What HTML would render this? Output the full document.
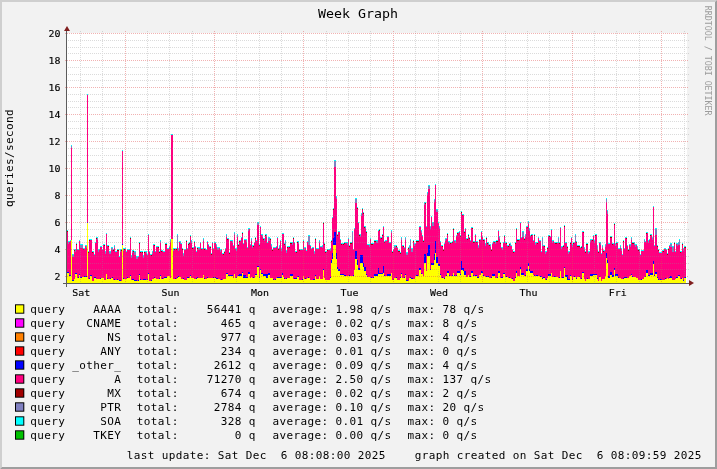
<!DOCTYPE html>
<html lang="en"><head><meta charset="utf-8"><title>Week Graph</title>
<style>
html,body{margin:0;padding:0;background:#f2f2f2;}
body{width:717px;height:469px;overflow:hidden;}
svg{display:block;will-change:transform;}
text{font-family:'DejaVu Sans Mono','Liberation Mono',monospace;fill:#000;white-space:pre;}
.lg{font-size:11px;letter-spacing:0.378px;}
.ax{font-size:10px;letter-spacing:0px;}
.tt{font-size:13px;letter-spacing:0.17px;}
.wm{font-size:8.3px;fill:#9c9c9c;letter-spacing:0px;}
</style></head><body>
<svg width="717" height="469" viewBox="0 0 717 469">
<rect x="0" y="0" width="717" height="469" fill="#f2f2f2"/>
<polygon points="0,0 717,0 715,2 2,2 2,467 0,469" fill="#cfcfcf"/>
<polygon points="717,469 0,469 2,467 715,467 715,2 717,0" fill="#9e9e9e"/>
<rect x="67" y="33" width="620" height="250" fill="#fff"/>
<g shape-rendering="crispEdges">
<path fill="#ffff00" d="M67 273h2v10h-2zM69 276h2v7h-2zM71 240h1v43h-1zM72 281h2v2h-2zM74 279h1v4h-1zM75 274h2v9h-2zM77 278h2v5h-2zM79 275h1v8h-1zM80 278h2v5h-2zM82 277h5v6h-5zM87 223h1v60h-1zM88 279h2v4h-2zM90 276h2v7h-2zM92 281h2v2h-2zM94 278h2v5h-2zM96 279h5v4h-5zM101 278h3v5h-3zM104 280h2v3h-2zM106 274h1v9h-1zM107 279h4v4h-4zM111 278h2v5h-2zM113 280h6v3h-6zM119 281h3v2h-3zM122 245h1v38h-1zM123 279h4v4h-4zM127 278h3v5h-3zM130 276h1v7h-1zM131 280h3v3h-3zM134 281h5v2h-5zM139 275h1v8h-1zM140 280h8v3h-8zM148 274h1v9h-1zM149 281h3v2h-3zM152 279h2v4h-2zM154 278h2v5h-2zM156 279h4v4h-4zM160 276h1v7h-1zM161 279h3v4h-3zM164 278h3v5h-3zM167 276h3v7h-3zM170 278h1v5h-1zM171 239h2v44h-2zM173 279h4v4h-4zM177 278h1v5h-1zM178 277h3v6h-3zM181 279h3v4h-3zM184 280h3v3h-3zM187 278h3v5h-3zM190 276h1v7h-1zM191 278h3v5h-3zM194 279h3v4h-3zM197 278h6v5h-6zM203 275h1v8h-1zM204 279h3v4h-3zM207 278h9v5h-9zM216 279h4v4h-4zM220 280h3v3h-3zM223 279h3v4h-3zM226 274h2v9h-2zM228 276h5v7h-5zM233 278h1v5h-1zM234 274h1v9h-1zM235 278h2v5h-2zM237 276h5v7h-5zM242 273h1v10h-1zM243 278h5v5h-5zM248 274h2v9h-2zM250 278h1v5h-1zM251 277h1v6h-1zM252 278h3v5h-3zM255 275h2v8h-2zM257 267h2v16h-2zM259 278h1v5h-1zM260 270h1v13h-1zM261 274h2v9h-2zM263 276h3v7h-3zM266 278h2v5h-2zM268 275h2v8h-2zM270 278h3v5h-3zM273 280h3v3h-3zM276 278h6v5h-6zM282 275h1v8h-1zM283 277h1v6h-1zM284 279h3v4h-3zM287 278h3v5h-3zM290 276h3v7h-3zM293 279h4v4h-4zM297 277h2v6h-2zM299 280h4v3h-4zM303 276h1v7h-1zM304 279h3v4h-3zM307 278h3v5h-3zM310 280h5v3h-5zM315 276h1v7h-1zM316 279h3v4h-3zM319 276h1v7h-1zM320 279h3v4h-3zM323 270h1v13h-1zM324 278h1v5h-1zM325 280h5v3h-5zM330 278h1v5h-1zM331 263h1v20h-1zM332 259h1v24h-1zM333 245h3v38h-3zM336 259h1v24h-1zM337 269h1v14h-1zM338 271h2v12h-2zM340 275h4v8h-4zM344 276h10v7h-10zM354 270h1v13h-1zM355 259h2v24h-2zM357 265h1v18h-1zM358 270h2v13h-2zM360 263h3v20h-3zM363 267h1v16h-1zM364 271h2v12h-2zM366 275h1v8h-1zM367 277h3v6h-3zM370 278h4v5h-4zM374 276h4v7h-4zM378 274h5v9h-5zM383 273h1v10h-1zM384 276h7v7h-7zM391 273h1v10h-1zM392 280h2v3h-2zM394 278h3v5h-3zM397 280h3v3h-3zM400 278h1v5h-1zM401 274h1v9h-1zM402 278h3v5h-3zM405 275h1v8h-1zM406 281h3v2h-3zM409 278h2v5h-2zM411 279h4v4h-4zM415 276h4v7h-4zM419 270h2v13h-2zM421 274h2v9h-2zM423 276h1v7h-1zM424 263h2v20h-2zM426 271h1v12h-1zM427 256h3v27h-3zM430 270h1v13h-1zM431 265h3v18h-3zM434 260h1v23h-1zM435 253h1v30h-1zM436 263h2v20h-2zM438 266h2v17h-2zM440 275h1v8h-1zM441 278h3v5h-3zM444 279h1v4h-1zM445 276h2v7h-2zM447 273h2v10h-2zM449 276h4v7h-4zM453 273h1v10h-1zM454 276h3v7h-3zM457 273h3v10h-3zM460 275h1v8h-1zM461 270h2v13h-2zM463 271h1v12h-1zM464 275h2v8h-2zM466 277h2v6h-2zM468 275h1v8h-1zM469 277h2v6h-2zM471 273h2v10h-2zM473 276h4v7h-4zM477 278h2v5h-2zM479 275h2v8h-2zM481 273h2v10h-2zM483 276h2v7h-2zM485 277h4v6h-4zM489 278h3v5h-3zM492 276h3v7h-3zM495 278h3v5h-3zM498 273h2v10h-2zM500 278h3v5h-3zM503 274h2v9h-2zM505 277h3v6h-3zM508 278h3v5h-3zM511 279h2v4h-2zM513 281h2v2h-2zM515 278h1v5h-1zM516 273h1v10h-1zM517 276h3v7h-3zM520 269h1v14h-1zM521 275h3v8h-3zM524 276h2v7h-2zM526 271h2v12h-2zM528 266h1v17h-1zM529 271h1v12h-1zM530 273h3v10h-3zM533 275h1v8h-1zM534 276h6v7h-6zM540 277h2v6h-2zM542 279h1v4h-1zM543 278h2v5h-2zM545 280h2v3h-2zM547 278h1v5h-1zM548 276h3v7h-3zM551 273h1v10h-1zM552 277h6v6h-6zM558 278h2v5h-2zM560 271h1v12h-1zM561 278h3v5h-3zM564 268h1v15h-1zM565 277h2v6h-2zM567 280h3v3h-3zM570 276h2v7h-2zM572 280h1v3h-1zM573 277h3v6h-3zM576 279h1v4h-1zM577 277h3v6h-3zM580 279h2v4h-2zM582 273h2v10h-2zM584 279h1v4h-1zM585 281h1v2h-1zM586 279h4v4h-4zM590 276h3v7h-3zM593 275h4v8h-4zM597 279h1v4h-1zM598 281h1v2h-1zM599 277h2v6h-2zM601 281h1v2h-1zM602 279h3v4h-3zM605 276h1v7h-1zM606 258h1v25h-1zM607 263h1v20h-1zM608 278h2v5h-2zM610 275h2v8h-2zM612 277h2v6h-2zM614 270h1v13h-1zM615 276h3v7h-3zM618 278h3v5h-3zM621 279h3v4h-3zM624 278h5v5h-5zM629 276h2v7h-2zM631 275h1v8h-1zM632 277h4v6h-4zM636 278h2v5h-2zM638 280h4v3h-4zM642 279h2v4h-2zM644 277h2v6h-2zM646 273h2v10h-2zM648 276h2v7h-2zM650 275h3v8h-3zM653 264h1v19h-1zM654 276h1v7h-1zM655 274h2v9h-2zM657 278h1v5h-1zM658 280h7v3h-7zM665 279h2v4h-2zM667 278h1v5h-1zM668 279h1v4h-1zM669 278h3v5h-3zM672 280h3v3h-3zM675 279h1v4h-1zM676 278h2v5h-2zM678 276h2v7h-2zM680 279h2v4h-2zM682 278h1v5h-1zM683 281h1v2h-1zM684 278h2v5h-2z"/>
<path fill="#0000ff" d="M67 272h2v1h-2zM69 275h2v1h-2zM72 280h2v1h-2zM75 273h2v1h-2zM78 277h1v1h-1zM79 274h1v1h-1zM80 277h2v1h-2zM84 276h3v1h-3zM87 222h1v1h-1zM89 278h1v1h-1zM90 275h2v1h-2zM94 277h2v1h-2zM100 278h1v1h-1zM107 278h1v1h-1zM110 278h1v1h-1zM112 277h1v1h-1zM114 279h1v1h-1zM117 279h1v1h-1zM119 280h2v1h-2zM122 244h1v1h-1zM123 278h1v1h-1zM127 277h1v1h-1zM130 275h1v1h-1zM132 279h2v1h-2zM134 280h3v1h-3zM138 280h1v1h-1zM139 274h1v1h-1zM140 279h1v1h-1zM143 279h3v1h-3zM147 279h1v1h-1zM148 273h1v1h-1zM151 280h1v1h-1zM154 277h1v1h-1zM159 278h1v1h-1zM160 275h1v1h-1zM162 278h1v1h-1zM164 277h3v1h-3zM175 278h1v1h-1zM177 277h1v1h-1zM178 276h1v1h-1zM183 278h1v1h-1zM187 277h2v1h-2zM190 275h1v1h-1zM196 278h1v1h-1zM197 277h1v1h-1zM204 278h1v1h-1zM207 277h1v1h-1zM213 277h1v1h-1zM215 277h1v1h-1zM216 278h2v1h-2zM221 279h1v1h-1zM226 273h2v1h-2zM228 275h5v1h-5zM236 277h1v1h-1zM238 275h1v1h-1zM239 274h3v2h-3zM242 272h1v1h-1zM243 275h3v3h-3zM246 277h2v1h-2zM248 272h2v2h-2zM253 277h1v1h-1zM255 274h2v1h-2zM257 266h2v1h-2zM259 277h1v1h-1zM260 269h1v1h-1zM261 273h2v1h-2zM263 274h3v2h-3zM266 274h2v4h-2zM268 273h2v2h-2zM273 279h1v1h-1zM275 279h1v1h-1zM277 277h5v1h-5zM282 273h1v2h-1zM284 278h1v1h-1zM286 278h1v1h-1zM290 274h3v2h-3zM294 278h3v1h-3zM297 276h2v1h-2zM302 279h1v1h-1zM305 278h1v1h-1zM308 277h1v1h-1zM313 279h2v1h-2zM315 275h1v1h-1zM323 269h1v1h-1zM330 277h1v1h-1zM331 260h1v3h-1zM332 253h1v6h-1zM333 238h1v7h-1zM334 232h2v13h-2zM336 253h1v6h-1zM337 267h1v2h-1zM338 269h2v2h-2zM340 274h4v1h-4zM344 275h2v1h-2zM349 275h1v1h-1zM353 275h1v1h-1zM355 251h2v8h-2zM357 260h1v5h-1zM358 268h2v2h-2zM360 255h3v8h-3zM363 263h1v4h-1zM364 267h2v4h-2zM366 274h1v1h-1zM367 276h1v1h-1zM371 277h1v1h-1zM373 277h1v1h-1zM374 274h4v2h-4zM378 268h1v6h-1zM379 273h4v1h-4zM383 266h1v7h-1zM384 275h1v1h-1zM387 274h4v2h-4zM393 279h1v1h-1zM396 277h1v1h-1zM400 277h1v1h-1zM401 273h1v1h-1zM404 277h1v1h-1zM405 274h1v1h-1zM406 280h2v1h-2zM410 277h1v1h-1zM411 278h2v1h-2zM416 275h2v1h-2zM419 268h2v2h-2zM421 273h1v1h-1zM424 254h2v9h-2zM427 253h1v3h-1zM428 245h2v11h-2zM430 269h1v1h-1zM431 263h3v2h-3zM434 254h1v6h-1zM435 241h1v12h-1zM436 257h2v6h-2zM438 264h2v2h-2zM440 274h1v1h-1zM442 277h1v1h-1zM444 278h1v1h-1zM446 275h1v1h-1zM447 271h2v2h-2zM449 275h1v1h-1zM452 275h1v1h-1zM454 275h1v1h-1zM456 275h1v1h-1zM457 271h3v2h-3zM460 274h1v1h-1zM461 261h1v9h-1zM462 268h1v2h-1zM463 268h1v3h-1zM464 271h2v4h-2zM469 276h2v1h-2zM471 271h2v2h-2zM473 275h1v1h-1zM475 275h2v1h-2zM477 277h2v1h-2zM481 271h2v2h-2zM483 275h1v1h-1zM486 276h3v1h-3zM491 277h1v1h-1zM492 274h3v2h-3zM497 277h1v1h-1zM498 271h2v2h-2zM501 277h2v1h-2zM503 273h2v1h-2zM506 276h1v1h-1zM509 277h1v1h-1zM512 278h1v1h-1zM515 277h1v1h-1zM516 271h1v2h-1zM520 267h1v2h-1zM521 273h3v2h-3zM525 275h1v1h-1zM526 269h2v2h-2zM528 263h1v3h-1zM529 269h1v2h-1zM530 271h3v2h-3zM534 275h1v1h-1zM536 275h2v1h-2zM540 276h2v1h-2zM542 278h1v1h-1zM543 277h2v1h-2zM546 279h1v1h-1zM548 274h3v2h-3zM554 276h2v1h-2zM559 277h1v1h-1zM562 277h2v1h-2zM564 267h1v1h-1zM565 275h2v2h-2zM567 275h1v5h-1zM568 279h2v1h-2zM570 275h1v1h-1zM572 279h1v1h-1zM574 276h1v1h-1zM576 278h1v1h-1zM579 276h1v1h-1zM581 278h1v1h-1zM582 272h2v1h-2zM587 278h1v1h-1zM590 274h3v2h-3zM593 274h4v1h-4zM597 278h1v1h-1zM599 276h1v1h-1zM606 253h1v5h-1zM607 260h1v3h-1zM608 276h2v2h-2zM610 272h2v3h-2zM612 275h2v2h-2zM614 268h1v2h-1zM615 274h3v2h-3zM618 277h1v1h-1zM623 278h1v1h-1zM624 277h3v1h-3zM631 274h1v1h-1zM632 276h1v1h-1zM641 279h1v1h-1zM645 276h1v1h-1zM646 270h2v3h-2zM648 275h2v1h-2zM650 273h3v2h-3zM653 261h1v3h-1zM654 275h1v1h-1zM655 272h2v2h-2zM657 277h1v1h-1zM658 279h1v1h-1zM660 279h2v1h-2zM665 278h1v1h-1zM669 277h1v1h-1zM670 276h2v2h-2zM676 277h2v1h-2zM678 275h2v1h-2zM681 278h1v1h-1zM683 280h1v1h-1zM684 277h2v1h-2z"/>
<path fill="#ff0080" d="M67 232h1v40h-1zM68 244h1v28h-1zM69 242h1v33h-1zM70 241h1v34h-1zM71 148h1v92h-1zM72 257h2v23h-2zM74 251h1v28h-1zM75 252h1v21h-1zM76 245h1v28h-1zM77 250h1v28h-1zM78 250h1v27h-1zM79 241h1v33h-1zM80 248h3v29h-3zM83 250h1v27h-1zM84 249h1v27h-1zM85 246h1v30h-1zM86 248h1v28h-1zM87 95h1v127h-1zM88 253h1v26h-1zM89 241h1v37h-1zM90 240h2v35h-2zM92 253h1v28h-1zM93 252h1v29h-1zM94 255h1v22h-1zM95 243h1v34h-1zM96 239h1v40h-1zM97 240h1v39h-1zM98 252h1v27h-1zM99 250h1v29h-1zM100 247h2v31h-2zM102 250h1v28h-1zM103 245h1v33h-1zM104 246h1v34h-1zM105 254h1v26h-1zM106 234h1v40h-1zM107 246h1v32h-1zM108 247h1v32h-1zM109 254h1v25h-1zM110 254h1v24h-1zM111 250h1v28h-1zM112 250h1v27h-1zM113 251h1v29h-1zM114 248h1v31h-1zM115 252h2v28h-2zM117 251h1v28h-1zM118 251h1v29h-1zM119 257h1v23h-1zM120 252h1v28h-1zM121 251h1v30h-1zM122 151h1v93h-1zM123 251h1v27h-1zM124 250h1v29h-1zM125 249h1v30h-1zM126 252h1v27h-1zM127 250h1v27h-1zM128 250h2v28h-2zM130 239h1v36h-1zM131 258h1v22h-1zM132 253h1v26h-1zM133 252h1v27h-1zM134 255h2v25h-2zM136 259h1v21h-1zM137 259h1v22h-1zM138 257h1v23h-1zM139 244h1v30h-1zM140 253h1v26h-1zM141 252h1v28h-1zM142 253h1v27h-1zM143 258h1v21h-1zM144 253h1v26h-1zM145 252h1v27h-1zM146 254h1v26h-1zM147 255h1v24h-1zM148 235h1v38h-1zM149 252h1v29h-1zM150 255h1v26h-1zM151 256h1v24h-1zM152 254h1v25h-1zM153 245h1v34h-1zM154 246h1v31h-1zM155 252h1v26h-1zM156 247h2v32h-2zM158 248h1v31h-1zM159 253h1v25h-1zM160 243h1v32h-1zM161 252h1v27h-1zM162 251h1v27h-1zM163 252h1v27h-1zM164 252h1v25h-1zM165 245h2v32h-2zM167 249h2v27h-2zM169 247h1v29h-1zM170 242h1v36h-1zM171 135h2v104h-2zM173 251h1v28h-1zM174 250h1v29h-1zM175 249h1v29h-1zM176 250h1v29h-1zM177 247h1v30h-1zM178 251h1v25h-1zM179 242h1v35h-1zM180 244h1v33h-1zM181 244h1v35h-1zM182 250h1v29h-1zM183 256h1v22h-1zM184 250h2v30h-2zM186 242h1v38h-1zM187 249h1v28h-1zM188 245h1v32h-1zM189 244h1v34h-1zM190 237h1v38h-1zM191 243h1v35h-1zM192 249h1v29h-1zM193 248h1v30h-1zM194 243h1v36h-1zM195 247h1v32h-1zM196 252h1v26h-1zM197 249h1v28h-1zM198 250h2v28h-2zM200 243h1v35h-1zM201 250h1v28h-1zM202 249h1v29h-1zM203 241h1v34h-1zM204 250h1v28h-1zM205 249h1v30h-1zM206 250h1v29h-1zM207 242h1v35h-1zM208 245h1v33h-1zM209 247h1v31h-1zM210 248h1v30h-1zM211 255h1v23h-1zM212 243h1v35h-1zM213 249h1v28h-1zM214 243h1v35h-1zM215 243h1v34h-1zM216 247h1v31h-1zM217 250h1v28h-1zM218 250h1v29h-1zM219 248h1v31h-1zM220 252h1v28h-1zM221 250h1v29h-1zM222 254h1v26h-1zM223 255h1v24h-1zM224 253h1v26h-1zM225 249h1v30h-1zM226 237h1v36h-1zM227 240h1v33h-1zM228 239h1v36h-1zM229 254h1v21h-1zM230 241h2v34h-2zM232 243h1v32h-1zM233 246h1v32h-1zM234 235h1v39h-1zM235 249h1v29h-1zM236 251h1v26h-1zM237 237h1v39h-1zM238 246h1v29h-1zM239 242h1v32h-1zM240 241h1v33h-1zM241 238h1v36h-1zM242 234h1v38h-1zM243 244h1v31h-1zM244 240h2v35h-2zM246 242h1v35h-1zM247 248h1v29h-1zM248 231h1v41h-1zM249 229h1v43h-1zM250 245h1v33h-1zM251 241h1v36h-1zM252 248h1v30h-1zM253 247h1v30h-1zM254 243h1v35h-1zM255 239h1v35h-1zM256 241h1v33h-1zM257 225h2v41h-2zM259 246h1v31h-1zM260 227h1v42h-1zM261 235h1v38h-1zM262 237h1v36h-1zM263 240h1v34h-1zM264 241h1v33h-1zM265 236h1v38h-1zM266 237h1v37h-1zM267 243h1v31h-1zM268 241h2v32h-2zM270 240h1v38h-1zM271 247h1v31h-1zM272 251h1v27h-1zM273 248h1v31h-1zM274 248h1v32h-1zM275 248h1v31h-1zM276 247h1v31h-1zM277 238h1v39h-1zM278 250h1v27h-1zM279 248h1v29h-1zM280 241h1v36h-1zM281 251h1v26h-1zM282 234h1v39h-1zM283 234h1v43h-1zM284 245h1v33h-1zM285 246h1v33h-1zM286 253h1v25h-1zM287 248h1v30h-1zM288 247h1v31h-1zM289 248h1v30h-1zM290 244h2v30h-2zM292 245h1v29h-1zM293 239h1v40h-1zM294 243h1v35h-1zM295 252h1v26h-1zM296 253h1v25h-1zM297 243h1v33h-1zM298 244h1v32h-1zM299 251h1v29h-1zM300 250h2v30h-2zM302 250h1v29h-1zM303 242h1v34h-1zM304 250h1v29h-1zM305 248h1v30h-1zM306 251h1v28h-1zM307 242h1v36h-1zM308 245h1v32h-1zM309 245h1v33h-1zM310 246h1v34h-1zM311 249h1v31h-1zM312 248h1v32h-1zM313 248h1v31h-1zM314 254h1v25h-1zM315 240h1v35h-1zM316 249h3v30h-3zM319 243h1v33h-1zM320 247h2v32h-2zM322 248h1v31h-1zM323 224h1v45h-1zM324 245h1v33h-1zM325 253h1v27h-1zM326 252h1v28h-1zM327 251h1v29h-1zM328 250h2v30h-2zM330 251h1v26h-1zM331 242h1v18h-1zM332 218h1v35h-1zM333 210h1v28h-1zM334 167h2v65h-2zM336 199h1v54h-1zM337 236h1v31h-1zM338 232h2v37h-2zM340 240h1v34h-1zM341 245h1v29h-1zM342 244h1v30h-1zM343 245h1v29h-1zM344 244h1v31h-1zM345 243h1v32h-1zM346 243h1v33h-1zM347 245h1v31h-1zM348 239h1v37h-1zM349 247h1v28h-1zM350 244h2v32h-2zM352 242h1v34h-1zM353 250h1v25h-1zM354 229h1v41h-1zM355 203h2v48h-2zM357 209h1v51h-1zM358 223h1v45h-1zM359 236h1v32h-1zM360 237h1v18h-1zM361 216h1v39h-1zM362 210h1v45h-1zM363 214h1v49h-1zM364 228h1v39h-1zM365 229h1v38h-1zM366 233h1v41h-1zM367 245h1v31h-1zM368 245h1v32h-1zM369 247h1v30h-1zM370 239h1v39h-1zM371 245h1v32h-1zM372 245h1v33h-1zM373 244h1v33h-1zM374 242h2v32h-2zM376 243h2v31h-2zM378 231h1v37h-1zM379 231h1v42h-1zM380 238h1v35h-1zM381 239h1v34h-1zM382 236h1v37h-1zM383 227h1v39h-1zM384 243h1v32h-1zM385 241h2v35h-2zM387 237h2v37h-2zM389 243h2v31h-2zM391 233h1v40h-1zM392 253h1v27h-1zM393 250h1v29h-1zM394 248h2v30h-2zM396 247h1v30h-1zM397 248h1v32h-1zM398 252h2v28h-2zM400 254h1v23h-1zM401 240h1v33h-1zM402 246h1v32h-1zM403 247h1v31h-1zM404 248h1v29h-1zM405 240h1v34h-1zM406 255h2v25h-2zM408 249h1v32h-1zM409 250h1v28h-1zM410 246h1v31h-1zM411 252h2v26h-2zM413 242h1v37h-1zM414 246h1v33h-1zM415 244h1v32h-1zM416 242h2v33h-2zM418 242h1v34h-1zM419 227h2v41h-2zM421 233h1v40h-1zM422 236h1v38h-1zM423 242h1v34h-1zM424 205h1v49h-1zM425 204h1v50h-1zM426 227h1v44h-1zM427 195h1v58h-1zM428 189h2v56h-2zM430 229h1v40h-1zM431 217h1v46h-1zM432 226h2v37h-2zM434 202h1v52h-1zM435 185h1v56h-1zM436 212h2v45h-2zM438 223h1v41h-1zM439 229h1v35h-1zM440 242h1v32h-1zM441 246h1v32h-1zM442 247h1v30h-1zM443 251h1v27h-1zM444 244h1v34h-1zM445 241h1v35h-1zM446 239h1v36h-1zM447 235h1v36h-1zM448 242h1v29h-1zM449 244h1v31h-1zM450 244h1v32h-1zM451 243h1v33h-1zM452 243h1v32h-1zM453 230h1v43h-1zM454 241h1v34h-1zM455 243h1v33h-1zM456 236h1v39h-1zM457 234h1v37h-1zM458 233h1v38h-1zM459 232h1v39h-1zM460 237h1v37h-1zM461 213h1v48h-1zM462 216h1v52h-1zM463 215h1v53h-1zM464 233h1v38h-1zM465 229h1v42h-1zM466 239h1v38h-1zM467 240h1v37h-1zM468 236h1v39h-1zM469 239h1v37h-1zM470 241h1v35h-1zM471 228h1v43h-1zM472 229h1v42h-1zM473 243h1v32h-1zM474 243h1v33h-1zM475 235h1v40h-1zM476 243h1v32h-1zM477 242h1v35h-1zM478 248h1v29h-1zM479 241h1v34h-1zM480 240h1v35h-1zM481 232h1v39h-1zM482 237h1v34h-1zM483 241h1v34h-1zM484 240h1v36h-1zM485 246h1v31h-1zM486 239h1v37h-1zM487 244h1v32h-1zM488 245h1v31h-1zM489 246h1v32h-1zM490 247h1v31h-1zM491 251h1v26h-1zM492 244h1v30h-1zM493 242h1v32h-1zM494 243h1v31h-1zM495 244h1v34h-1zM496 242h1v36h-1zM497 242h1v35h-1zM498 231h1v40h-1zM499 239h1v32h-1zM500 244h1v34h-1zM501 248h1v29h-1zM502 250h1v27h-1zM503 243h1v30h-1zM504 237h1v36h-1zM505 243h1v34h-1zM506 244h1v32h-1zM507 246h1v31h-1zM508 247h1v31h-1zM509 245h1v32h-1zM510 246h1v32h-1zM511 246h1v33h-1zM512 250h1v28h-1zM513 253h1v28h-1zM514 252h1v29h-1zM515 244h1v33h-1zM516 230h1v41h-1zM517 241h2v35h-2zM519 240h1v36h-1zM520 223h1v44h-1zM521 238h1v35h-1zM522 237h2v36h-2zM524 240h1v36h-1zM525 237h1v38h-1zM526 227h1v42h-1zM527 228h1v41h-1zM528 224h1v39h-1zM529 231h1v38h-1zM530 236h2v35h-2zM532 235h1v36h-1zM533 241h1v34h-1zM534 236h1v39h-1zM535 245h1v31h-1zM536 243h1v32h-1zM537 244h1v31h-1zM538 238h1v38h-1zM539 241h2v35h-2zM541 252h1v24h-1zM542 246h1v32h-1zM543 246h1v31h-1zM544 247h1v30h-1zM545 254h1v26h-1zM546 252h1v27h-1zM547 249h1v29h-1zM548 236h1v38h-1zM549 237h2v37h-2zM551 230h1v43h-1zM552 243h1v34h-1zM553 241h1v36h-1zM554 243h1v33h-1zM555 244h1v32h-1zM556 244h1v33h-1zM557 243h1v34h-1zM558 243h1v35h-1zM559 244h1v33h-1zM560 228h1v43h-1zM561 249h1v29h-1zM562 247h2v30h-2zM564 227h1v40h-1zM565 243h2v32h-2zM567 248h1v27h-1zM568 254h1v25h-1zM569 252h1v27h-1zM570 244h1v31h-1zM571 238h1v38h-1zM572 247h1v32h-1zM573 244h1v33h-1zM574 243h1v33h-1zM575 241h1v36h-1zM576 243h1v35h-1zM577 247h2v30h-2zM579 247h1v29h-1zM580 248h1v31h-1zM581 248h1v30h-1zM582 232h1v40h-1zM583 233h1v39h-1zM584 250h1v29h-1zM585 253h1v28h-1zM586 245h1v34h-1zM587 245h1v33h-1zM588 254h1v25h-1zM589 252h1v27h-1zM590 242h1v32h-1zM591 240h1v34h-1zM592 241h1v33h-1zM593 236h1v38h-1zM594 243h1v31h-1zM595 236h1v38h-1zM596 235h1v39h-1zM597 250h1v28h-1zM598 253h1v28h-1zM599 243h1v33h-1zM600 245h1v32h-1zM601 254h1v27h-1zM602 248h1v31h-1zM603 252h1v27h-1zM604 251h1v28h-1zM605 247h1v29h-1zM606 202h1v51h-1zM607 214h1v46h-1zM608 244h2v32h-2zM610 238h2v34h-2zM612 245h1v30h-1zM613 244h1v31h-1zM614 225h1v43h-1zM615 246h1v28h-1zM616 244h1v30h-1zM617 243h1v31h-1zM618 249h1v28h-1zM619 249h1v29h-1zM620 248h1v30h-1zM621 251h1v28h-1zM622 255h1v24h-1zM623 242h1v36h-1zM624 249h1v28h-1zM625 238h1v39h-1zM626 239h1v38h-1zM627 246h1v32h-1zM628 251h1v27h-1zM629 245h1v31h-1zM630 247h1v29h-1zM631 240h1v34h-1zM632 244h1v32h-1zM633 244h1v33h-1zM634 245h1v32h-1zM635 247h1v30h-1zM636 245h1v33h-1zM637 249h1v29h-1zM638 251h1v29h-1zM639 252h1v28h-1zM640 255h1v25h-1zM641 251h3v28h-3zM644 242h1v35h-1zM645 242h1v34h-1zM646 234h1v36h-1zM647 233h1v37h-1zM648 243h1v32h-1zM649 240h1v35h-1zM650 236h1v37h-1zM651 235h1v38h-1zM652 240h1v33h-1zM653 207h1v54h-1zM654 246h1v29h-1zM655 235h2v37h-2zM657 247h1v30h-1zM658 251h1v28h-1zM659 253h1v27h-1zM660 253h2v26h-2zM662 251h1v29h-1zM663 252h1v28h-1zM664 249h1v31h-1zM665 249h1v29h-1zM666 250h1v29h-1zM667 255h1v23h-1zM668 250h1v29h-1zM669 246h1v31h-1zM670 247h2v29h-2zM672 252h2v28h-2zM674 244h1v36h-1zM675 252h1v27h-1zM676 244h1v33h-1zM677 246h1v31h-1zM678 245h2v30h-2zM680 253h1v26h-1zM681 252h1v26h-1zM682 245h1v33h-1zM683 251h1v29h-1zM684 248h2v29h-2z"/>
<path fill="#a00000" d="M67 231h1v1h-1zM74 250h1v1h-1zM76 244h1v1h-1zM83 249h1v1h-1zM88 252h1v1h-1zM89 240h1v1h-1zM92 252h1v1h-1zM96 238h1v1h-1zM104 245h1v1h-1zM108 246h1v1h-1zM113 250h1v1h-1zM117 250h2v1h-2zM121 250h1v1h-1zM124 249h1v1h-1zM130 238h1v1h-1zM133 251h1v1h-1zM139 243h1v1h-1zM140 252h1v1h-1zM142 252h1v1h-1zM144 252h1v1h-1zM151 255h1v1h-1zM154 245h1v1h-1zM158 247h1v1h-1zM159 252h1v1h-1zM161 251h1v1h-1zM165 244h2v1h-2zM174 249h1v1h-1zM176 249h1v1h-1zM182 249h1v1h-1zM186 241h1v1h-1zM188 244h1v1h-1zM189 243h1v1h-1zM190 236h1v1h-1zM192 248h1v1h-1zM194 242h1v1h-1zM197 248h1v1h-1zM201 249h1v1h-1zM204 249h1v1h-1zM210 247h1v1h-1zM211 254h1v1h-1zM223 254h1v1h-1zM224 252h1v1h-1zM227 239h1v1h-1zM229 253h1v1h-1zM238 245h1v1h-1zM239 241h1v1h-1zM242 233h1v1h-1zM253 246h1v1h-1zM255 238h1v1h-1zM259 245h1v1h-1zM263 239h1v1h-1zM265 235h1v1h-1zM270 239h1v1h-1zM272 250h1v1h-1zM278 249h1v1h-1zM284 244h1v1h-1zM287 247h1v1h-1zM289 247h1v1h-1zM290 243h2v1h-2zM293 238h1v1h-1zM296 252h1v1h-1zM297 242h1v1h-1zM299 250h1v1h-1zM303 241h1v1h-1zM315 239h1v1h-1zM323 223h1v1h-1zM324 244h1v1h-1zM325 252h1v1h-1zM327 250h1v1h-1zM331 241h1v1h-1zM333 209h1v1h-1zM337 235h1v1h-1zM341 244h1v1h-1zM343 244h1v1h-1zM344 243h1v1h-1zM349 246h1v1h-1zM350 243h2v1h-2zM357 208h1v1h-1zM359 235h1v1h-1zM362 209h1v1h-1zM363 213h1v1h-1zM364 227h1v1h-1zM366 232h1v1h-1zM371 244h2v1h-2zM374 241h2v1h-2zM379 230h1v1h-1zM381 238h1v1h-1zM382 235h1v1h-1zM384 242h1v1h-1zM392 252h1v1h-1zM396 246h1v1h-1zM398 251h2v1h-2zM400 253h1v1h-1zM403 246h1v1h-1zM408 248h1v1h-1zM413 241h1v1h-1zM416 241h3v1h-3zM423 241h1v1h-1zM425 203h1v1h-1zM442 246h1v1h-1zM443 250h1v1h-1zM447 234h1v1h-1zM450 243h1v1h-1zM452 242h1v1h-1zM453 229h1v1h-1zM457 233h1v1h-1zM460 236h1v1h-1zM461 212h1v1h-1zM462 215h1v1h-1zM464 232h1v1h-1zM467 239h1v1h-1zM468 235h1v1h-1zM469 238h1v1h-1zM472 228h1v1h-1zM473 242h2v1h-2zM476 242h1v1h-1zM479 240h1v1h-1zM483 240h1v1h-1zM486 238h1v1h-1zM487 243h1v1h-1zM489 245h1v1h-1zM491 250h1v1h-1zM494 242h1v1h-1zM496 241h2v1h-2zM500 243h1v1h-1zM504 236h1v1h-1zM506 243h1v1h-1zM508 246h1v1h-1zM509 244h1v1h-1zM513 252h1v1h-1zM515 243h1v1h-1zM516 229h1v1h-1zM517 240h2v1h-2zM524 239h1v1h-1zM527 227h1v1h-1zM531 235h1v1h-1zM534 235h1v1h-1zM537 243h1v1h-1zM544 246h1v1h-1zM547 248h1v1h-1zM549 236h1v1h-1zM555 243h2v1h-2zM559 243h1v1h-1zM563 246h1v1h-1zM564 226h1v1h-1zM567 247h1v1h-1zM570 243h1v1h-1zM573 243h1v1h-1zM576 242h1v1h-1zM577 246h3v1h-3zM581 247h1v1h-1zM583 232h1v1h-1zM585 252h1v1h-1zM586 244h2v1h-2zM592 240h1v1h-1zM595 235h1v1h-1zM598 252h1v1h-1zM603 251h1v1h-1zM610 237h2v1h-2zM612 244h1v1h-1zM614 224h1v1h-1zM616 243h1v1h-1zM623 241h1v1h-1zM626 238h1v1h-1zM628 250h1v1h-1zM632 243h2v1h-2zM638 250h1v1h-1zM646 233h1v1h-1zM650 235h1v1h-1zM657 246h1v1h-1zM658 250h1v1h-1zM663 251h1v1h-1zM667 254h1v1h-1zM668 249h1v1h-1zM674 243h1v1h-1zM680 252h1v1h-1zM682 244h1v1h-1zM684 247h2v1h-2z"/>
<path fill="#8080c0" d="M68 242h1v2h-1zM71 146h1v2h-1zM72 255h2v2h-2zM75 250h1v2h-1zM80 245h3v3h-3zM86 246h1v2h-1zM97 238h1v2h-1zM98 250h1v2h-1zM105 252h1v2h-1zM109 252h2v2h-2zM111 248h2v2h-2zM114 246h1v2h-1zM120 250h1v2h-1zM123 249h1v2h-1zM131 256h1v2h-1zM132 251h1v2h-1zM134 252h2v3h-2zM136 257h2v2h-2zM143 256h1v2h-1zM146 252h1v2h-1zM152 252h1v2h-1zM160 241h1v2h-1zM170 240h1v2h-1zM173 249h1v2h-1zM177 235h1v12h-1zM178 249h1v2h-1zM180 242h1v2h-1zM183 254h1v2h-1zM191 241h1v2h-1zM198 248h2v2h-2zM203 239h1v2h-1zM216 245h1v2h-1zM217 248h2v2h-2zM220 250h1v2h-1zM226 235h1v2h-1zM232 241h1v2h-1zM234 233h1v2h-1zM236 249h1v2h-1zM237 235h1v2h-1zM246 240h1v2h-1zM248 229h1v2h-1zM251 239h1v2h-1zM252 246h1v2h-1zM257 223h2v2h-2zM262 235h1v2h-1zM264 239h1v2h-1zM266 235h1v2h-1zM268 238h2v3h-2zM271 245h1v2h-1zM279 246h1v2h-1zM281 249h1v2h-1zM285 241h1v5h-1zM286 251h1v2h-1zM292 243h1v2h-1zM298 242h1v2h-1zM304 248h1v2h-1zM308 236h2v9h-2zM314 252h1v2h-1zM319 241h1v2h-1zM322 246h1v2h-1zM330 249h1v2h-1zM334 161h2v6h-2zM336 197h1v2h-1zM347 243h1v2h-1zM352 232h1v10h-1zM355 199h2v4h-2zM360 235h1v2h-1zM361 214h1v2h-1zM365 227h1v2h-1zM369 245h1v2h-1zM376 241h2v2h-2zM391 231h1v2h-1zM394 246h2v2h-2zM401 238h1v2h-1zM405 238h1v2h-1zM406 253h2v2h-2zM409 246h1v4h-1zM410 240h1v6h-1zM411 249h2v3h-2zM414 244h1v2h-1zM421 231h1v2h-1zM424 203h1v2h-1zM427 193h1v2h-1zM428 186h2v3h-2zM430 227h1v2h-1zM432 223h2v3h-2zM434 200h1v2h-1zM436 210h2v2h-2zM439 227h1v2h-1zM445 239h1v2h-1zM449 242h1v2h-1zM455 241h1v2h-1zM478 246h1v2h-1zM485 244h1v2h-1zM488 243h1v2h-1zM490 245h1v2h-1zM495 242h1v2h-1zM499 237h1v2h-1zM502 248h1v2h-1zM510 244h1v2h-1zM522 232h2v5h-2zM525 235h1v2h-1zM528 222h1v2h-1zM529 229h1v2h-1zM535 243h1v2h-1zM542 238h1v8h-1zM545 252h1v2h-1zM552 241h1v2h-1zM558 238h1v5h-1zM561 247h1v2h-1zM568 252h1v2h-1zM572 245h1v2h-1zM575 235h1v6h-1zM584 248h1v2h-1zM588 252h1v2h-1zM590 240h1v2h-1zM594 241h1v2h-1zM597 246h1v4h-1zM600 243h1v2h-1zM602 246h1v2h-1zM605 245h1v2h-1zM606 199h1v3h-1zM607 211h1v3h-1zM615 244h1v2h-1zM620 246h1v2h-1zM621 249h1v2h-1zM630 245h1v2h-1zM631 238h1v2h-1zM634 243h1v2h-1zM635 245h1v2h-1zM637 247h1v2h-1zM639 250h1v2h-1zM644 240h1v2h-1zM648 241h1v2h-1zM652 238h1v2h-1zM655 229h2v6h-2zM670 244h2v3h-2zM672 247h2v5h-2zM677 244h1v2h-1zM678 243h1v2h-1zM679 240h1v5h-1zM683 249h1v2h-1z"/>
<path fill="#00ffff" d="M67 230h1v1h-1zM68 241h2v1h-2zM70 240h1v1h-1zM71 145h1v1h-1zM72 254h2v1h-2zM74 249h2v1h-2zM76 243h1v1h-1zM77 249h2v1h-2zM79 240h1v1h-1zM80 244h3v1h-3zM83 248h2v1h-2zM85 245h2v1h-2zM87 94h1v1h-1zM88 251h1v1h-1zM89 239h3v1h-3zM92 251h2v1h-2zM94 254h1v1h-1zM95 242h1v1h-1zM96 237h2v1h-2zM98 249h2v1h-2zM100 246h2v1h-2zM102 249h1v1h-1zM103 244h2v1h-2zM105 251h1v1h-1zM106 233h1v1h-1zM107 245h2v1h-2zM109 251h2v1h-2zM111 247h2v1h-2zM113 249h1v1h-1zM114 245h1v1h-1zM115 251h2v1h-2zM117 249h2v1h-2zM119 256h1v1h-1zM120 249h2v1h-2zM122 150h1v1h-1zM123 248h3v1h-3zM126 251h1v1h-1zM127 249h3v1h-3zM130 237h1v1h-1zM131 255h1v1h-1zM132 250h2v1h-2zM134 251h2v1h-2zM136 256h3v1h-3zM139 242h1v1h-1zM140 251h3v1h-3zM143 255h1v1h-1zM144 251h3v1h-3zM147 254h1v1h-1zM148 234h1v1h-1zM149 251h1v1h-1zM150 254h2v1h-2zM152 251h1v1h-1zM153 244h2v1h-2zM155 251h1v1h-1zM156 246h3v1h-3zM159 251h1v1h-1zM160 240h1v1h-1zM161 250h2v1h-2zM163 251h2v1h-2zM165 243h2v1h-2zM167 248h2v1h-2zM169 246h1v1h-1zM170 239h1v1h-1zM171 134h2v1h-2zM173 248h4v1h-4zM177 234h1v1h-1zM178 248h1v1h-1zM179 241h2v1h-2zM181 243h1v1h-1zM182 248h1v1h-1zM183 253h1v1h-1zM184 249h2v1h-2zM186 240h1v1h-1zM187 248h1v1h-1zM188 243h1v1h-1zM189 242h1v1h-1zM190 235h1v1h-1zM191 240h1v1h-1zM192 247h2v1h-2zM194 241h1v1h-1zM195 246h1v1h-1zM196 251h1v1h-1zM197 247h3v1h-3zM200 242h1v1h-1zM201 248h2v1h-2zM203 238h1v1h-1zM204 248h2v1h-2zM206 249h1v1h-1zM207 241h1v1h-1zM208 244h1v1h-1zM209 246h2v1h-2zM211 253h1v1h-1zM212 242h1v1h-1zM213 248h1v1h-1zM214 242h2v1h-2zM216 244h1v1h-1zM217 247h3v1h-3zM220 249h2v1h-2zM222 253h2v1h-2zM224 251h1v1h-1zM225 248h1v1h-1zM226 234h1v1h-1zM227 238h2v1h-2zM229 252h1v1h-1zM230 240h3v1h-3zM233 245h1v1h-1zM234 232h1v1h-1zM235 248h2v1h-2zM237 234h1v1h-1zM238 244h1v1h-1zM239 240h2v1h-2zM241 237h1v1h-1zM242 232h1v1h-1zM243 243h1v1h-1zM244 239h3v1h-3zM247 247h1v1h-1zM248 228h2v1h-2zM250 244h1v1h-1zM251 238h1v1h-1zM252 245h2v1h-2zM254 242h1v1h-1zM255 237h1v1h-1zM256 240h1v1h-1zM257 222h2v1h-2zM259 244h1v1h-1zM260 226h1v1h-1zM261 234h2v1h-2zM263 238h2v1h-2zM265 234h2v1h-2zM267 242h1v1h-1zM268 237h2v1h-2zM270 238h1v1h-1zM271 244h1v1h-1zM272 249h1v1h-1zM273 247h3v1h-3zM276 246h1v1h-1zM277 237h1v1h-1zM278 248h1v1h-1zM279 245h1v1h-1zM280 240h1v1h-1zM281 248h1v1h-1zM282 233h2v1h-2zM284 243h1v1h-1zM285 240h1v1h-1zM286 250h1v1h-1zM287 246h3v1h-3zM290 242h3v1h-3zM293 237h1v1h-1zM294 242h1v1h-1zM295 251h2v1h-2zM297 241h2v1h-2zM299 249h4v1h-4zM303 240h1v1h-1zM304 247h2v1h-2zM306 250h1v1h-1zM307 241h1v1h-1zM308 235h2v1h-2zM310 245h1v1h-1zM311 248h1v1h-1zM312 247h2v1h-2zM314 251h1v1h-1zM315 238h1v1h-1zM316 248h3v1h-3zM319 240h1v1h-1zM320 246h2v1h-2zM322 245h1v1h-1zM323 222h1v1h-1zM324 243h1v1h-1zM325 251h2v1h-2zM327 249h3v1h-3zM330 248h1v1h-1zM331 240h1v1h-1zM332 217h1v1h-1zM333 208h1v1h-1zM334 160h2v1h-2zM336 196h1v1h-1zM337 234h1v1h-1zM338 231h2v1h-2zM340 239h1v1h-1zM341 243h3v1h-3zM344 242h4v1h-4zM348 238h1v1h-1zM349 245h1v1h-1zM350 242h2v1h-2zM352 231h1v1h-1zM353 249h1v1h-1zM354 228h1v1h-1zM355 198h2v1h-2zM357 207h1v1h-1zM358 222h1v1h-1zM359 234h2v1h-2zM361 213h1v1h-1zM362 208h1v1h-1zM363 212h1v1h-1zM364 226h2v1h-2zM366 231h1v1h-1zM367 244h3v1h-3zM370 238h1v1h-1zM371 243h3v1h-3zM374 240h4v1h-4zM378 230h1v1h-1zM379 229h1v1h-1zM380 237h2v1h-2zM382 234h1v1h-1zM383 226h1v1h-1zM384 241h1v1h-1zM385 240h2v1h-2zM387 236h2v1h-2zM389 242h2v1h-2zM391 230h1v1h-1zM392 251h1v1h-1zM393 249h1v1h-1zM394 245h3v1h-3zM397 247h1v1h-1zM398 250h2v1h-2zM400 252h1v1h-1zM401 237h1v1h-1zM402 245h2v1h-2zM404 247h1v1h-1zM405 237h1v1h-1zM406 252h2v1h-2zM408 247h1v1h-1zM409 245h1v1h-1zM410 239h1v1h-1zM411 248h2v1h-2zM413 240h1v1h-1zM414 243h2v1h-2zM416 240h3v1h-3zM419 226h2v1h-2zM421 230h1v1h-1zM422 235h1v1h-1zM423 240h1v1h-1zM424 202h2v1h-2zM426 226h1v1h-1zM427 192h1v1h-1zM428 185h2v1h-2zM430 226h1v1h-1zM431 216h1v1h-1zM432 222h2v1h-2zM434 199h1v1h-1zM435 184h1v1h-1zM436 209h2v1h-2zM438 222h1v1h-1zM439 226h1v1h-1zM440 241h1v1h-1zM441 245h2v1h-2zM443 249h1v1h-1zM444 243h1v1h-1zM445 238h2v1h-2zM447 233h1v1h-1zM448 241h2v1h-2zM450 242h2v1h-2zM452 241h1v1h-1zM453 228h1v1h-1zM454 240h2v1h-2zM456 235h1v1h-1zM457 232h2v1h-2zM459 231h1v1h-1zM460 235h1v1h-1zM461 211h1v1h-1zM462 214h2v1h-2zM464 231h1v1h-1zM465 228h1v1h-1zM466 238h2v1h-2zM468 234h1v1h-1zM469 237h1v1h-1zM470 240h1v1h-1zM471 227h2v1h-2zM473 241h2v1h-2zM475 234h1v1h-1zM476 241h2v1h-2zM478 245h1v1h-1zM479 239h2v1h-2zM481 231h1v1h-1zM482 236h1v1h-1zM483 239h2v1h-2zM485 243h1v1h-1zM486 237h1v1h-1zM487 242h2v1h-2zM489 244h2v1h-2zM491 249h1v1h-1zM492 243h1v1h-1zM493 241h3v1h-3zM496 240h2v1h-2zM498 230h1v1h-1zM499 236h1v1h-1zM500 242h1v1h-1zM501 247h2v1h-2zM503 242h1v1h-1zM504 235h1v1h-1zM505 242h2v1h-2zM507 245h2v1h-2zM509 243h2v1h-2zM511 245h1v1h-1zM512 249h1v1h-1zM513 251h2v1h-2zM515 242h1v1h-1zM516 228h1v1h-1zM517 239h3v1h-3zM520 222h1v1h-1zM521 237h1v1h-1zM522 231h2v1h-2zM524 238h1v1h-1zM525 234h1v1h-1zM526 226h2v1h-2zM528 221h1v1h-1zM529 228h1v1h-1zM530 235h1v1h-1zM531 234h2v1h-2zM533 240h1v1h-1zM534 234h1v1h-1zM535 242h3v1h-3zM538 237h1v1h-1zM539 240h2v1h-2zM541 251h1v1h-1zM542 237h1v1h-1zM543 245h2v1h-2zM545 251h2v1h-2zM547 247h1v1h-1zM548 235h2v1h-2zM550 236h1v1h-1zM551 229h1v1h-1zM552 240h2v1h-2zM554 242h4v1h-4zM558 237h1v1h-1zM559 242h1v1h-1zM560 227h1v1h-1zM561 246h2v1h-2zM563 245h1v1h-1zM564 225h1v1h-1zM565 242h2v1h-2zM567 246h1v1h-1zM568 251h2v1h-2zM570 242h1v1h-1zM571 237h1v1h-1zM572 244h1v1h-1zM573 242h2v1h-2zM575 234h1v1h-1zM576 241h1v1h-1zM577 245h3v1h-3zM580 247h1v1h-1zM581 246h1v1h-1zM582 231h2v1h-2zM584 247h1v1h-1zM585 251h1v1h-1zM586 243h2v1h-2zM588 251h2v1h-2zM590 239h3v1h-3zM593 235h1v1h-1zM594 240h1v1h-1zM595 234h2v1h-2zM597 245h1v1h-1zM598 251h1v1h-1zM599 242h2v1h-2zM601 253h1v1h-1zM602 245h1v1h-1zM603 250h2v1h-2zM605 244h1v1h-1zM606 198h1v1h-1zM607 210h1v1h-1zM608 243h2v1h-2zM610 236h2v1h-2zM612 243h2v1h-2zM614 223h1v1h-1zM615 243h1v1h-1zM616 242h2v1h-2zM618 248h2v1h-2zM620 245h1v1h-1zM621 248h1v1h-1zM622 254h1v1h-1zM623 240h1v1h-1zM624 248h1v1h-1zM625 237h2v1h-2zM627 245h1v1h-1zM628 249h1v1h-1zM629 244h2v1h-2zM631 237h1v1h-1zM632 242h3v1h-3zM635 244h2v1h-2zM637 246h1v1h-1zM638 249h2v1h-2zM640 254h1v1h-1zM641 250h3v1h-3zM644 239h1v1h-1zM645 241h1v1h-1zM646 232h2v1h-2zM648 240h1v1h-1zM649 239h1v1h-1zM650 234h2v1h-2zM652 237h1v1h-1zM653 206h1v1h-1zM654 245h1v1h-1zM655 228h2v1h-2zM657 245h1v1h-1zM658 249h1v1h-1zM659 252h3v1h-3zM662 250h2v1h-2zM664 248h2v1h-2zM666 249h1v1h-1zM667 253h1v1h-1zM668 248h1v1h-1zM669 245h1v1h-1zM670 243h2v1h-2zM672 246h2v1h-2zM674 242h1v1h-1zM675 251h1v1h-1zM676 243h2v1h-2zM678 242h1v1h-1zM679 239h1v1h-1zM680 251h2v1h-2zM682 243h1v1h-1zM683 248h1v1h-1zM684 246h2v1h-2z"/>
</g>
<g shape-rendering="crispEdges" fill="none" stroke-width="1" stroke-dasharray="1 1">
<path stroke="#8f8f8f" stroke-opacity="0.32" d="M66 40.5H689M66 47.5H689M66 53.5H689M66 67.5H689M66 74.5H689M66 80.5H689M66 94.5H689M66 101.5H689M66 107.5H689M66 121.5H689M66 128.5H689M66 134.5H689M66 148.5H689M66 155.5H689M66 161.5H689M66 175.5H689M66 182.5H689M66 188.5H689M66 202.5H689M66 209.5H689M66 215.5H689M66 229.5H689M66 236.5H689M66 242.5H689M66 256.5H689M66 263.5H689M66 269.5H689M80.5 31V285M102.5 31V285M147.5 31V285M169.5 31V285M192.5 31V285M236.5 31V285M259.5 31V285M281.5 31V285M326.5 31V285M348.5 31V285M370.5 31V285M415.5 31V285M438.5 31V285M460.5 31V285M505.5 31V285M527.5 31V285M549.5 31V285M594.5 31V285M616.5 31V285M639.5 31V285M684.5 31V285"/>
<path stroke="#de4f4f" stroke-opacity="0.44" d="M65 33.5H689M65 60.5H689M65 87.5H689M65 114.5H689M65 141.5H689M65 168.5H689M65 195.5H689M65 222.5H689M65 249.5H689M65 276.5H689M125.5 31V285M214.5 31V285M303.5 31V285M393.5 31V285M482.5 31V285M572.5 31V285M661.5 31V285"/>
</g>
<g shape-rendering="crispEdges"><rect x="66" y="29" width="1" height="258" fill="#5c5c5c"/><rect x="63" y="283" width="628" height="1" fill="#5c5c5c"/></g>
<polygon points="689,280 689,286 694,283" fill="#801f1f"/>
<polygon points="64,31 70,31 67,26" fill="#801f1f"/>
<text transform="translate(60.6 37) scale(1.0952 1)" font-size="9.1" text-anchor="end" stroke="#000" stroke-width="0.14">20</text>
<text transform="translate(60.6 64) scale(1.0952 1)" font-size="9.1" text-anchor="end" stroke="#000" stroke-width="0.14">18</text>
<text transform="translate(60.6 91) scale(1.0952 1)" font-size="9.1" text-anchor="end" stroke="#000" stroke-width="0.14">16</text>
<text transform="translate(60.6 118) scale(1.0952 1)" font-size="9.1" text-anchor="end" stroke="#000" stroke-width="0.14">14</text>
<text transform="translate(60.6 145) scale(1.0952 1)" font-size="9.1" text-anchor="end" stroke="#000" stroke-width="0.14">12</text>
<text transform="translate(60.6 172) scale(1.0952 1)" font-size="9.1" text-anchor="end" stroke="#000" stroke-width="0.14">10</text>
<text transform="translate(60.6 199) scale(1.0952 1)" font-size="9.1" text-anchor="end" stroke="#000" stroke-width="0.14">8</text>
<text transform="translate(60.6 226) scale(1.0952 1)" font-size="9.1" text-anchor="end" stroke="#000" stroke-width="0.14">6</text>
<text transform="translate(60.6 253) scale(1.0952 1)" font-size="9.1" text-anchor="end" stroke="#000" stroke-width="0.14">4</text>
<text transform="translate(60.6 280) scale(1.0952 1)" font-size="9.1" text-anchor="end" stroke="#000" stroke-width="0.14">2</text>
<text transform="translate(81.2 296) scale(1.0952 1)" font-size="9.1" text-anchor="middle" stroke="#000" stroke-width="0.14">Sat</text>
<text transform="translate(170.6 296) scale(1.0952 1)" font-size="9.1" text-anchor="middle" stroke="#000" stroke-width="0.14">Sun</text>
<text transform="translate(260.1 296) scale(1.0952 1)" font-size="9.1" text-anchor="middle" stroke="#000" stroke-width="0.14">Mon</text>
<text transform="translate(349.5 296) scale(1.0952 1)" font-size="9.1" text-anchor="middle" stroke="#000" stroke-width="0.14">Tue</text>
<text transform="translate(438.9 296) scale(1.0952 1)" font-size="9.1" text-anchor="middle" stroke="#000" stroke-width="0.14">Wed</text>
<text transform="translate(528.4 296) scale(1.0952 1)" font-size="9.1" text-anchor="middle" stroke="#000" stroke-width="0.14">Thu</text>
<text transform="translate(617.8 296) scale(1.0952 1)" font-size="9.1" text-anchor="middle" stroke="#000" stroke-width="0.14">Fri</text>
<text transform="translate(358 17.6) scale(1.1073 1)" font-size="12" text-anchor="middle">Week Graph</text>
<text class="lg" transform="translate(13,158) rotate(-90)" text-anchor="middle">queries/second</text>
<text class="wm" transform="translate(705,5.7) rotate(90)">RRDTOOL / TOBI OETIKER</text>
<rect x="15" y="304.3" width="9.3" height="9.4" fill="#000"/><rect x="16" y="305.3" width="7.3" height="7.4" fill="#ffff00"/>
<text class="lg" x="30.2" y="313" xml:space="preserve">query    AAAA</text>
<text class="lg" x="136.7" y="313" xml:space="preserve">total:    56441 q</text>
<text class="lg" x="272.5" y="313" xml:space="preserve">average: 1.98 q/s</text>
<text class="lg" x="407.6" y="313" xml:space="preserve">max: 78 q/s</text>
<rect x="15" y="318.3" width="9.3" height="9.4" fill="#000"/><rect x="16" y="319.3" width="7.3" height="7.4" fill="#ff00ff"/>
<text class="lg" x="30.2" y="327" xml:space="preserve">query   CNAME</text>
<text class="lg" x="136.7" y="327" xml:space="preserve">total:      465 q</text>
<text class="lg" x="272.5" y="327" xml:space="preserve">average: 0.02 q/s</text>
<text class="lg" x="407.6" y="327" xml:space="preserve">max: 8 q/s</text>
<rect x="15" y="332.3" width="9.3" height="9.4" fill="#000"/><rect x="16" y="333.3" width="7.3" height="7.4" fill="#ff8000"/>
<text class="lg" x="30.2" y="341" xml:space="preserve">query      NS</text>
<text class="lg" x="136.7" y="341" xml:space="preserve">total:      977 q</text>
<text class="lg" x="272.5" y="341" xml:space="preserve">average: 0.03 q/s</text>
<text class="lg" x="407.6" y="341" xml:space="preserve">max: 4 q/s</text>
<rect x="15" y="346.3" width="9.3" height="9.4" fill="#000"/><rect x="16" y="347.3" width="7.3" height="7.4" fill="#ff0000"/>
<text class="lg" x="30.2" y="355" xml:space="preserve">query     ANY</text>
<text class="lg" x="136.7" y="355" xml:space="preserve">total:      234 q</text>
<text class="lg" x="272.5" y="355" xml:space="preserve">average: 0.01 q/s</text>
<text class="lg" x="407.6" y="355" xml:space="preserve">max: 0 q/s</text>
<rect x="15" y="360.3" width="9.3" height="9.4" fill="#000"/><rect x="16" y="361.3" width="7.3" height="7.4" fill="#0000ff"/>
<text class="lg" x="30.2" y="369" xml:space="preserve">query _other_</text>
<text class="lg" x="136.7" y="369" xml:space="preserve">total:     2612 q</text>
<text class="lg" x="272.5" y="369" xml:space="preserve">average: 0.09 q/s</text>
<text class="lg" x="407.6" y="369" xml:space="preserve">max: 4 q/s</text>
<rect x="15" y="374.3" width="9.3" height="9.4" fill="#000"/><rect x="16" y="375.3" width="7.3" height="7.4" fill="#ff0080"/>
<text class="lg" x="30.2" y="383" xml:space="preserve">query       A</text>
<text class="lg" x="136.7" y="383" xml:space="preserve">total:    71270 q</text>
<text class="lg" x="272.5" y="383" xml:space="preserve">average: 2.50 q/s</text>
<text class="lg" x="407.6" y="383" xml:space="preserve">max: 137 q/s</text>
<rect x="15" y="388.3" width="9.3" height="9.4" fill="#000"/><rect x="16" y="389.3" width="7.3" height="7.4" fill="#a00000"/>
<text class="lg" x="30.2" y="397" xml:space="preserve">query      MX</text>
<text class="lg" x="136.7" y="397" xml:space="preserve">total:      674 q</text>
<text class="lg" x="272.5" y="397" xml:space="preserve">average: 0.02 q/s</text>
<text class="lg" x="407.6" y="397" xml:space="preserve">max: 2 q/s</text>
<rect x="15" y="402.3" width="9.3" height="9.4" fill="#000"/><rect x="16" y="403.3" width="7.3" height="7.4" fill="#8080c0"/>
<text class="lg" x="30.2" y="411" xml:space="preserve">query     PTR</text>
<text class="lg" x="136.7" y="411" xml:space="preserve">total:     2784 q</text>
<text class="lg" x="272.5" y="411" xml:space="preserve">average: 0.10 q/s</text>
<text class="lg" x="407.6" y="411" xml:space="preserve">max: 20 q/s</text>
<rect x="15" y="416.3" width="9.3" height="9.4" fill="#000"/><rect x="16" y="417.3" width="7.3" height="7.4" fill="#00ffff"/>
<text class="lg" x="30.2" y="425" xml:space="preserve">query     SOA</text>
<text class="lg" x="136.7" y="425" xml:space="preserve">total:      328 q</text>
<text class="lg" x="272.5" y="425" xml:space="preserve">average: 0.01 q/s</text>
<text class="lg" x="407.6" y="425" xml:space="preserve">max: 0 q/s</text>
<rect x="15" y="430.3" width="9.3" height="9.4" fill="#000"/><rect x="16" y="431.3" width="7.3" height="7.4" fill="#00c000"/>
<text class="lg" x="30.2" y="439" xml:space="preserve">query    TKEY</text>
<text class="lg" x="136.7" y="439" xml:space="preserve">total:        0 q</text>
<text class="lg" x="272.5" y="439" xml:space="preserve">average: 0.00 q/s</text>
<text class="lg" x="407.6" y="439" xml:space="preserve">max: 0 q/s</text>
<text class="lg" x="126.8" y="459.4" xml:space="preserve">last update: Sat Dec  6 08:08:00 2025</text>
<text class="lg" x="414.8" y="459.4" xml:space="preserve">graph created on Sat Dec  6 08:09:59 2025</text>
</svg></body></html>
